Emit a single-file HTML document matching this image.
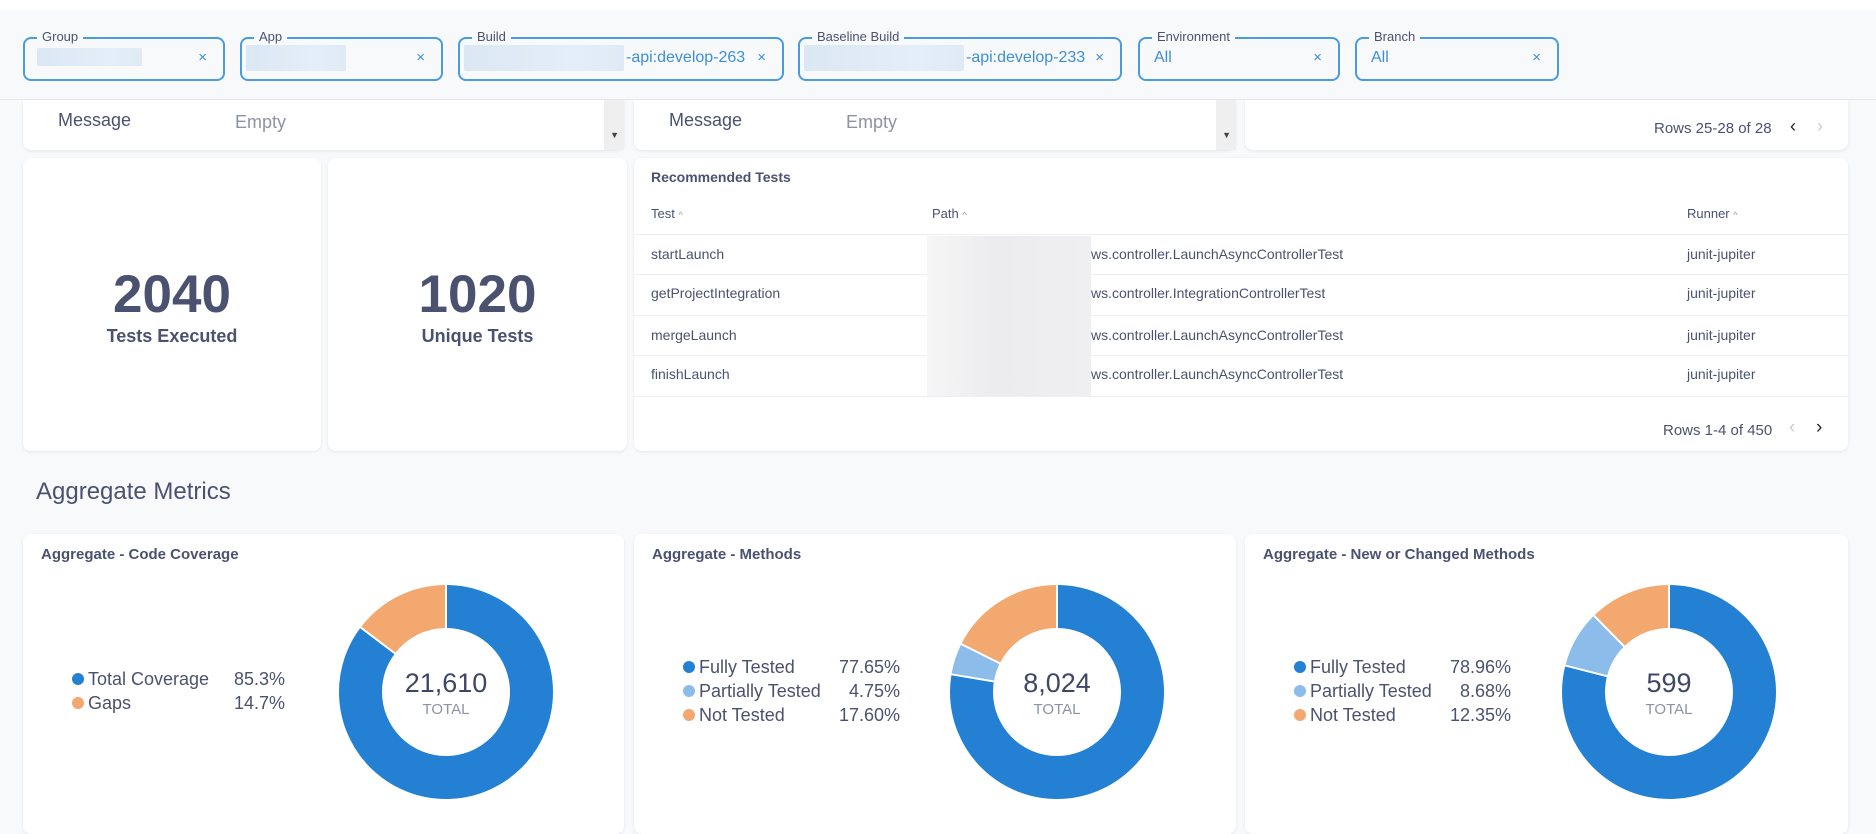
<!DOCTYPE html>
<html><head><meta charset="utf-8"><style>
*{box-sizing:border-box;margin:0;padding:0}
body{width:1876px;height:814px;overflow:hidden;background:#f8f9fb;font-family:"Liberation Sans",sans-serif;color:#4a5270;position:relative}
.abs{position:absolute}
.top{left:0;top:0;width:1876px;height:10px;background:#fff}
.hdrline{left:0;top:99px;width:1876px;height:1px;background:#e6e8ee}
.f{position:absolute;top:37px;height:44px;border:2px solid #4a9be0;border-radius:8px}
.f .l{position:absolute;top:-10px;left:12px;background:#f8f9fb;padding:0 5px;font-size:13px;color:#4a5270}
.f .v{position:absolute;top:10px;left:14px;font-size:16px;color:#3d8fd8}
.f .x{position:absolute;top:10px;right:16px;font-size:15px;color:#3d8fd8}
.blur{position:absolute;background:linear-gradient(90deg,#dbe7f4,#e4eef8 70%,#dfeaf6);border-radius:2px}
.card{position:absolute;background:#fff;border-radius:8px;box-shadow:0 1px 3px rgba(0,0,0,.08)}
.t{font-size:14px;color:#4a5270}
.big{position:absolute;width:100%;text-align:center;font-weight:bold;font-size:53px;top:106px;color:#4a5270}
.bl{position:absolute;width:100%;text-align:center;font-size:18px;top:168px;color:#4a5270;font-weight:600}
.row{position:absolute;left:0;right:0;height:1px;background:#eef0f3}
.ct{position:absolute;left:18px;top:12px;font-size:15px;font-weight:600}
.lg{position:absolute;font-size:18px}
.lg div{position:relative;height:24px;line-height:24px}
.lg .d{position:absolute;left:-16px;top:6px;width:12px;height:12px;border-radius:50%}
.lg .p{position:absolute;right:0;top:0}
.cen{position:absolute;width:160px;text-align:center}
.cen b{display:block;font-size:27px;font-weight:normal;color:#3f4766}
.cen span{display:block;font-size:15px;color:#8d93a6;margin-top:2px}
</style></head><body>
<div class="abs top"></div>
<div class="abs hdrline"></div>

<div class="f" style="left:23px;width:202px"><span class="l">Group</span><div class="blur" style="left:12px;top:9px;width:105px;height:18px"></div><span class="x">×</span></div>
<div class="f" style="left:240px;width:203px"><span class="l">App</span><div class="blur" style="left:4px;top:6px;width:100px;height:26px"></div><span class="x">×</span></div>
<div class="f" style="left:458px;width:326px"><span class="l">Build</span><div class="blur" style="left:4px;top:6px;width:160px;height:26px"></div><span class="v" style="left:166px">-api:develop-263</span><span class="x">×</span></div>
<div class="f" style="left:798px;width:324px"><span class="l">Baseline Build</span><div class="blur" style="left:4px;top:6px;width:160px;height:26px"></div><span class="v" style="left:166px">-api:develop-233</span><span class="x">×</span></div>
<div class="f" style="left:1138px;width:202px"><span class="l">Environment</span><span class="v">All</span><span class="x">×</span></div>
<div class="f" style="left:1355px;width:204px"><span class="l">Branch</span><span class="v">All</span><span class="x">×</span></div>

<div class="card" style="left:23px;top:100px;width:601px;height:50px;border-radius:0 0 8px 8px">
 <span class="abs" style="left:35px;top:10px;font-size:18px">Message</span>
 <span class="abs" style="left:212px;top:12px;font-size:18px;color:#8d93a6">Empty</span>
 <div class="abs" style="right:0;top:0;width:20px;height:50px;background:#efefef"></div>
 <span class="abs" style="right:5px;top:30px;font-size:9px;color:#444">▼</span>
</div>
<div class="card" style="left:634px;top:100px;width:602px;height:50px;border-radius:0 0 8px 8px">
 <span class="abs" style="left:35px;top:10px;font-size:18px">Message</span>
 <span class="abs" style="left:212px;top:12px;font-size:18px;color:#8d93a6">Empty</span>
 <div class="abs" style="right:0;top:0;width:20px;height:50px;background:#efefef"></div>
 <span class="abs" style="right:5px;top:30px;font-size:9px;color:#444">▼</span>
</div>
<div class="card" style="left:1245px;top:100px;width:603px;height:50px;border-radius:0 0 8px 8px">
 <span class="abs" style="left:409px;top:20px;font-size:15px">Rows 25-28 of 28</span>
 <span class="abs" style="left:545px;top:16px;font-size:18px;color:#222">&#x2039;</span>
 <span class="abs" style="left:572px;top:16px;font-size:18px;color:#ccc">&#x203A;</span>
</div>

<div class="card" style="left:23px;top:158px;width:298px;height:293px"><div class="big">2040</div><div class="bl">Tests Executed</div></div>
<div class="card" style="left:328px;top:158px;width:299px;height:293px"><div class="big">1020</div><div class="bl">Unique Tests</div></div>
<div class="card" style="left:634px;top:158px;width:1214px;height:293px">
 <span class="abs" style="left:17px;top:11px;font-size:14px;font-weight:600">Recommended Tests</span>
 <span class="abs t" style="left:17px;top:48px;font-size:13px">Test <span style="font-size:9px;color:#999">^</span></span>
 <span class="abs t" style="left:298px;top:48px;font-size:13px">Path <span style="font-size:9px;color:#999">^</span></span>
 <span class="abs t" style="left:1053px;top:48px;font-size:13px">Runner <span style="font-size:9px;color:#999">^</span></span>
 <div class="row" style="top:76px"></div><div class="row" style="top:116px"></div><div class="row" style="top:157px"></div><div class="row" style="top:197px"></div><div class="row" style="top:238px"></div>
 <div class="abs" style="left:293px;top:78px;width:164px;height:160px;background:linear-gradient(90deg,#f6f6f7,#ececee 40%,#efeff1)"></div>
 <span class="abs t" style="left:17px;top:88px">startLaunch</span><span class="abs t" style="left:457px;top:88px">ws.controller.LaunchAsyncControllerTest</span><span class="abs t" style="left:1053px;top:88px">junit-jupiter</span>
 <span class="abs t" style="left:17px;top:127px">getProjectIntegration</span><span class="abs t" style="left:457px;top:127px">ws.controller.IntegrationControllerTest</span><span class="abs t" style="left:1053px;top:127px">junit-jupiter</span>
 <span class="abs t" style="left:17px;top:169px">mergeLaunch</span><span class="abs t" style="left:457px;top:169px">ws.controller.LaunchAsyncControllerTest</span><span class="abs t" style="left:1053px;top:169px">junit-jupiter</span>
 <span class="abs t" style="left:17px;top:208px">finishLaunch</span><span class="abs t" style="left:457px;top:208px">ws.controller.LaunchAsyncControllerTest</span><span class="abs t" style="left:1053px;top:208px">junit-jupiter</span>
 <span class="abs" style="left:1029px;top:264px;font-size:15px">Rows 1-4 of 450</span>
 <span class="abs" style="left:1155px;top:259px;font-size:19px;color:#ccc">&#x2039;</span>
 <span class="abs" style="left:1182px;top:259px;font-size:19px;color:#222">&#x203A;</span>
</div>

<div class="abs" style="left:36px;top:478px;font-size:24px;color:#4a5270">Aggregate Metrics</div>

<div class="card" style="left:23px;top:534px;width:601px;height:300px">
 <div class="ct">Aggregate - Code Coverage</div>
 <div class="lg" style="left:65px;top:133px;width:197px">
  <div><i class="d" style="background:#2380d3"></i>Total Coverage<span class="p">85.3%</span></div>
  <div><i class="d" style="background:#f2a86f"></i>Gaps<span class="p">14.7%</span></div>
 </div>
 <svg class="abs" style="left:315px;top:50px" width="216" height="216" viewBox="-108 -108 216 216">
  <g fill="none" stroke-width="43" transform="rotate(-90)">
   <circle r="85.5" stroke="#2380d3" stroke-dasharray="458.2 600"/>
   <circle r="85.5" stroke="#f2a86f" stroke-dasharray="79 600" transform="rotate(307.1)"/>
  </g>
  <g stroke="#fff" stroke-width="2"><line x1="0" y1="-63" x2="0" y2="-108"/><line x1="0" y1="-63" x2="0" y2="-108" transform="rotate(307.1)"/></g>
 </svg>
 <div class="cen" style="left:343px;top:134px"><b>21,610</b><span>TOTAL</span></div>
</div>

<div class="card" style="left:634px;top:534px;width:602px;height:300px">
 <div class="ct">Aggregate - Methods</div>
 <div class="lg" style="left:65px;top:121px;width:201px">
  <div><i class="d" style="background:#2380d3"></i>Fully Tested<span class="p">77.65%</span></div>
  <div><i class="d" style="background:#8bbcea"></i>Partially Tested<span class="p">4.75%</span></div>
  <div><i class="d" style="background:#f2a86f"></i>Not Tested<span class="p">17.60%</span></div>
 </div>
 <svg class="abs" style="left:315px;top:50px" width="216" height="216" viewBox="-108 -108 216 216">
  <g fill="none" stroke-width="43" transform="rotate(-90)">
   <circle r="85.5" stroke="#2380d3" stroke-dasharray="417.1 600"/>
   <circle r="85.5" stroke="#8bbcea" stroke-dasharray="25.5 600" transform="rotate(279.5)"/>
   <circle r="85.5" stroke="#f2a86f" stroke-dasharray="94.6 600" transform="rotate(296.6)"/>
  </g>
  <g stroke="#fff" stroke-width="2"><line x1="0" y1="-63" x2="0" y2="-108"/><line x1="0" y1="-63" x2="0" y2="-108" transform="rotate(279.5)"/><line x1="0" y1="-63" x2="0" y2="-108" transform="rotate(296.6)"/></g>
 </svg>
 <div class="cen" style="left:343px;top:134px"><b>8,024</b><span>TOTAL</span></div>
</div>

<div class="card" style="left:1245px;top:534px;width:603px;height:300px">
 <div class="ct">Aggregate - New or Changed Methods</div>
 <div class="lg" style="left:65px;top:121px;width:201px">
  <div><i class="d" style="background:#2380d3"></i>Fully Tested<span class="p">78.96%</span></div>
  <div><i class="d" style="background:#8bbcea"></i>Partially Tested<span class="p">8.68%</span></div>
  <div><i class="d" style="background:#f2a86f"></i>Not Tested<span class="p">12.35%</span></div>
 </div>
 <svg class="abs" style="left:316px;top:50px" width="216" height="216" viewBox="-108 -108 216 216">
  <g fill="none" stroke-width="43" transform="rotate(-90)">
   <circle r="85.5" stroke="#2380d3" stroke-dasharray="424.2 600"/>
   <circle r="85.5" stroke="#8bbcea" stroke-dasharray="46.6 600" transform="rotate(284.3)"/>
   <circle r="85.5" stroke="#f2a86f" stroke-dasharray="66.4 600" transform="rotate(315.5)"/>
  </g>
  <g stroke="#fff" stroke-width="2"><line x1="0" y1="-63" x2="0" y2="-108"/><line x1="0" y1="-63" x2="0" y2="-108" transform="rotate(284.3)"/><line x1="0" y1="-63" x2="0" y2="-108" transform="rotate(315.5)"/></g>
 </svg>
 <div class="cen" style="left:344px;top:134px"><b>599</b><span>TOTAL</span></div>
</div>
</body></html>
